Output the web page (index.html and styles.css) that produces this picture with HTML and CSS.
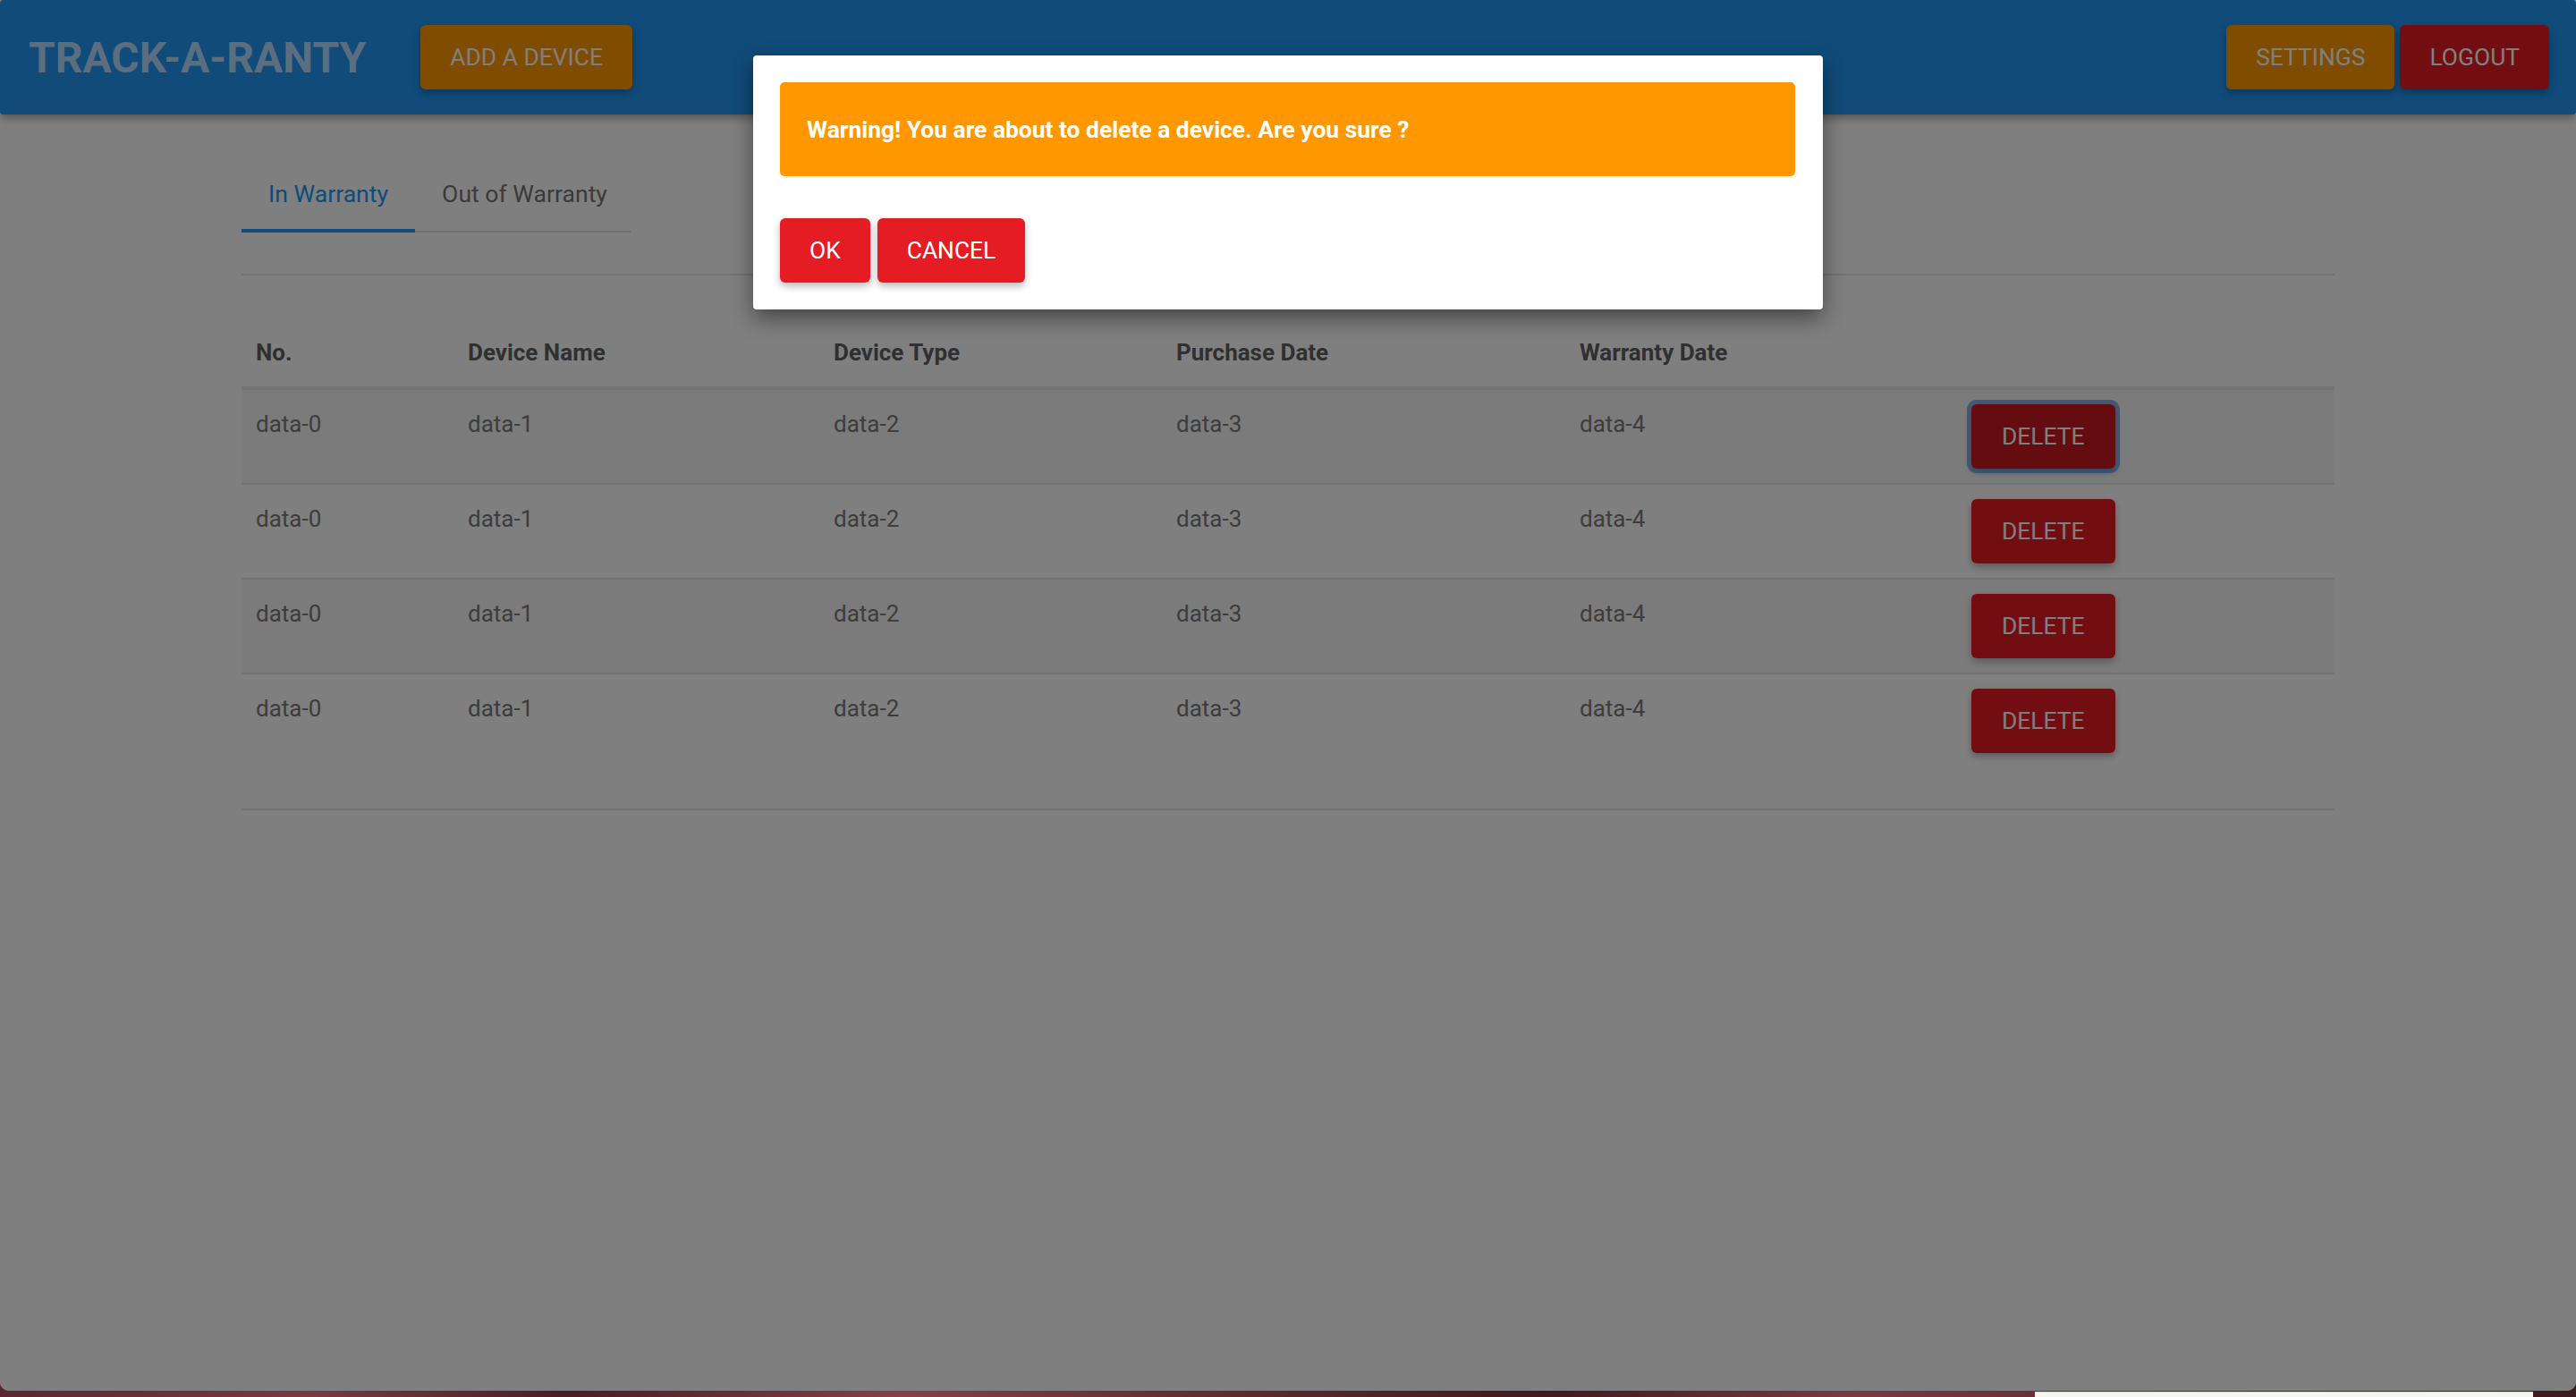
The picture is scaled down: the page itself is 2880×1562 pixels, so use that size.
FILE: index.html
```html
<!DOCTYPE html>
<html lang="en">
<head>
<meta charset="utf-8">
<title>Track-A-Ranty</title>
<link rel="stylesheet" href="styles.css">
</head>
<body>
<div class="app">
  <header class="topbar">
    <div class="brand">TRACK-A-RANTY</div>
    <button class="btn btn-orange">ADD A DEVICE</button>
    <div class="topbar-right">
      <button class="btn btn-orange">SETTINGS</button>
      <button class="btn btn-red">LOGOUT</button>
    </div>
  </header>

  <main class="content">
    <nav class="tabs">
      <a class="tab active">In Warranty</a>
      <a class="tab">Out of Warranty</a>
    </nav>
    <section class="panel">
      <table class="devices">
        <thead>
          <tr>
            <th>No.</th>
            <th>Device Name</th>
            <th>Device Type</th>
            <th>Purchase Date</th>
            <th>Warranty Date</th>
            <th></th>
          </tr>
        </thead>
        <tbody>
          <tr>
            <td>data-0</td><td>data-1</td><td>data-2</td><td>data-3</td><td>data-4</td>
            <td class="action"><button class="btn btn-red btn-focused">DELETE</button></td>
          </tr>
          <tr>
            <td>data-0</td><td>data-1</td><td>data-2</td><td>data-3</td><td>data-4</td>
            <td class="action"><button class="btn btn-red">DELETE</button></td>
          </tr>
          <tr>
            <td>data-0</td><td>data-1</td><td>data-2</td><td>data-3</td><td>data-4</td>
            <td class="action"><button class="btn btn-red">DELETE</button></td>
          </tr>
          <tr>
            <td>data-0</td><td>data-1</td><td>data-2</td><td>data-3</td><td>data-4</td>
            <td class="action"><button class="btn btn-red">DELETE</button></td>
          </tr>
        </tbody>
      </table>
    </section>
  </main>

  <div class="backdrop"></div>

  <div class="modal">
    <div class="alert">Warning! You are about to delete a device. Are you sure ?</div>
    <div class="modal-actions">
      <button class="btn btn-red">OK</button>
      <button class="btn btn-red">CANCEL</button>
    </div>
  </div>
</div>
<div class="desktop">
  <div class="desk-window"></div>
</div>
</body>
</html>
```

FILE: styles.css
```css
* {
  box-sizing: border-box;
}

html, body {
  margin: 0;
  padding: 0;
}

body {
  width: 2880px;
  height: 1562px;
  overflow: hidden;
  font-family: Roboto, "Liberation Sans", Arial, sans-serif;
  background: linear-gradient(90deg, #5b2630 0%, #7a3a44 12%, #4a1c24 22%, #86404a 35%, #5d2a2f 48%, #3f1a1e 60%, #7c3944 72%, #5a2730 85%, #3c1b1f 100%);
}

.app {
  position: relative;
  width: 2880px;
  height: 1555px;
  background: #ffffff;
  border-radius: 0 0 10px 10px;
  overflow: hidden;
}

/* ---------- top bar ---------- */
.topbar {
  display: flex;
  align-items: center;
  height: 128px;
  padding: 0 30px 0 32px;
  background: #2196f3;
  border-radius: 4px;
  box-shadow: 0 4px 10px rgba(0, 0, 0, 0.35);
}

.brand {
  font-size: 48px;
  font-weight: 700;
  color: #b4dcff;
  margin-right: 61px;
  white-space: nowrap;
}

.topbar-right {
  margin-left: auto;
  display: flex;
  gap: 6px;
}

.btn {
  height: 72px;
  padding: 0 33px;
  border: none;
  border-radius: 6px;
  font-family: Roboto, "Liberation Sans", Arial, sans-serif;
  font-size: 26.4px;
  font-weight: 400;
  color: #ffffff;
  white-space: nowrap;
  box-shadow: 0 4px 8px rgba(0, 0, 0, 0.28);
  cursor: pointer;
}

.btn-orange {
  background: #ff9800;
}

.btn-red {
  background: #e51c23;
}

.btn-focused {
  background: #cb1820;
  box-shadow: 0 0 0 5px rgba(40, 120, 220, 0.55), 0 4px 8px rgba(0, 0, 0, 0.28);
}

/* ---------- content ---------- */
.content {
  width: 2340px;
  margin: 44px auto 0;
}

.tabs {
  display: flex;
  width: 435px;
  box-shadow: inset 0 -2px 0 #dcdcdc;
}

.tab {
  display: flex;
  align-items: center;
  height: 88px;
  padding: 0 30px;
  font-size: 26.6px;
  color: #767676;
  white-space: nowrap;
}

.tab.active {
  color: #2196f3;
  box-shadow: inset 0 -4px 0 #2196f3;
}

.panel {
  margin-top: 46px;
  padding: 48px 0 46px;
  border-top: 2px solid #e4e4e4;
  border-bottom: 2px solid #e4e4e4;
}

.devices {
  width: 100%;
  border-collapse: collapse;
  table-layout: fixed;
  font-size: 26px;
  line-height: 36px;
}

.devices th,
.devices td {
  padding: 20px 16px;
  text-align: left;
  vertical-align: top;
}

.devices th {
  font-weight: 700;
  color: #606060;
  border-bottom: 4px solid #e8e8e8;
}

.devices th:nth-child(1) { width: 237px; }
.devices th:nth-child(2) { width: 409px; }
.devices th:nth-child(3) { width: 383px; }
.devices th:nth-child(4) { width: 451px; }
.devices th:nth-child(5) { width: 438px; }
.devices th:nth-child(6) { width: 422px; }

.devices td {
  color: #7a7a7a;
}

.devices td.action {
  padding: 16px;
}

.devices td.action .btn {
  padding: 0 34px;
}

.devices tbody tr {
  border-bottom: 2px solid #e4e4e4;
}

.devices tbody tr:nth-child(odd) {
  background: rgba(0, 0, 0, 0.03);
}

.devices tbody tr:last-child {
  border-bottom: none;
}

/* ---------- modal ---------- */
.backdrop {
  position: absolute;
  inset: 0;
  background: rgba(0, 0, 0, 0.5);
}

.modal {
  position: absolute;
  top: 62px;
  left: 842px;
  width: 1196px;
  padding: 30px 31px 30px 30px;
  background: #ffffff;
  border-radius: 4px;
  box-shadow: 0 10px 24px rgba(0, 0, 0, 0.45);
}

.alert {
  display: flex;
  align-items: center;
  height: 105px;
  padding: 0 30px;
  background: #ff9800;
  border-radius: 5px;
  color: #ffffff;
  font-size: 26.4px;
  font-weight: 700;
}

.modal-actions {
  display: flex;
  gap: 8px;
  margin-top: 47px;
}

/* ---------- desktop strip under the window ---------- */
.desktop {
  position: relative;
  height: 7px;
}

.desk-window {
  position: absolute;
  left: 2275px;
  top: 1px;
  width: 557px;
  height: 6px;
  background: #f6f6f1;
  border-top: 1px solid #d8d8d2;
}
```
